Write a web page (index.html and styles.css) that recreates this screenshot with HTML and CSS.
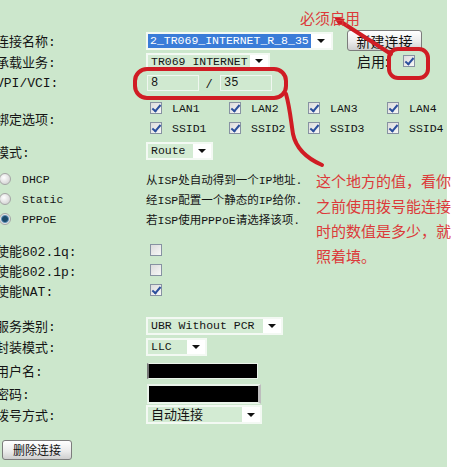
FILE: index.html
```html
<!DOCTYPE html>
<html lang="zh-CN">
<head>
<meta charset="utf-8">
<title>WAN 连接配置</title>
<link rel="stylesheet" href="styles.css">
</head>
<body>
<div class="panel">
  <div class="form">
    <div class="row r-name">
      <div class="lab">连接名称:</div>
      <div class="val">
        <div class="sel w-name"><span class="opt hl">2_TR069_INTERNET_R_8_35</span><span class="arr"></span></div>
        <button class="btn btn-new">新建连接</button>
      </div>
    </div>
    <div class="row r-svc">
      <div class="lab">承载业务:</div>
      <div class="val">
        <div class="sel w-svc"><span class="opt">TR069 INTERNET</span><span class="arr"></span></div>
        <span class="enable">启用:</span>
        <span class="cb on cb-enable"></span>
      </div>
    </div>
    <div class="row r-vpi">
      <div class="lab">VPI/VCI:</div>
      <div class="val">
        <span class="inp">8</span>
        <span class="slash">/</span>
        <span class="inp">35</span>
      </div>
    </div>
    <div class="row r-bind">
      <div class="lab">绑定选项:</div>
      <div class="val grid4">
        <span class="opt-cell"><span class="cb on"></span><span class="txt">LAN1</span></span>
        <span class="opt-cell"><span class="cb on"></span><span class="txt">LAN2</span></span>
        <span class="opt-cell"><span class="cb on"></span><span class="txt">LAN3</span></span>
        <span class="opt-cell"><span class="cb on"></span><span class="txt">LAN4</span></span>
        <span class="opt-cell"><span class="cb on"></span><span class="txt">SSID1</span></span>
        <span class="opt-cell"><span class="cb on"></span><span class="txt">SSID2</span></span>
        <span class="opt-cell"><span class="cb on"></span><span class="txt">SSID3</span></span>
        <span class="opt-cell"><span class="cb on"></span><span class="txt">SSID4</span></span>
      </div>
    </div>
    <div class="row r-mode">
      <div class="lab">模式:</div>
      <div class="val">
        <div class="sel w-mode"><span class="opt">Route</span><span class="arr"></span></div>
      </div>
    </div>
    <div class="row r-dhcp">
      <div class="lab"><span class="radio"></span><span class="rtxt">DHCP</span></div>
      <div class="val desc">从ISP处自动得到一个IP地址.</div>
    </div>
    <div class="row">
      <div class="lab"><span class="radio"></span><span class="rtxt">Static</span></div>
      <div class="val desc">经ISP配置一个静态的IP给你.</div>
    </div>
    <div class="row">
      <div class="lab"><span class="radio on"></span><span class="rtxt">PPPoE</span></div>
      <div class="val desc">若ISP使用PPPoE请选择该项.</div>
    </div>
    <div class="row r-q">
      <div class="lab">使能802.1q:</div>
      <div class="val pad"><span class="cb"></span></div>
    </div>
    <div class="row">
      <div class="lab">使能802.1p:</div>
      <div class="val pad"><span class="cb"></span></div>
    </div>
    <div class="row">
      <div class="lab">使能NAT:</div>
      <div class="val pad"><span class="cb on"></span></div>
    </div>
    <div class="row r-class">
      <div class="lab">服务类别:</div>
      <div class="val">
        <div class="sel w-class"><span class="opt">UBR Without PCR</span><span class="arr"></span></div>
      </div>
    </div>
    <div class="row">
      <div class="lab">封装模式:</div>
      <div class="val">
        <div class="sel w-encap"><span class="opt">LLC</span><span class="arr"></span></div>
      </div>
    </div>
    <div class="row r-user">
      <div class="lab">用户名:</div>
      <div class="val"><span class="blk user"></span></div>
    </div>
    <div class="row r-pwd">
      <div class="lab">密码:</div>
      <div class="val"><span class="blk pwd"></span></div>
    </div>
    <div class="row">
      <div class="lab">拨号方式:</div>
      <div class="val">
        <div class="sel w-dial"><span class="opt cjk">自动连接</span><span class="arr"></span></div>
      </div>
    </div>
    <div class="row r-del">
      <button class="btn btn-del">删除连接</button>
    </div>
  </div>

  <svg class="marks" width="469" height="468" viewBox="0 0 469 468" aria-hidden="true">
    <g fill="none" stroke="#d01c24" stroke-width="4" stroke-linecap="round" stroke-linejoin="round">
      <path d="M338 20 L391 54"/>
      <rect x="389" y="49" width="39" height="29" rx="9"/>
      <rect x="135" y="69" width="151" height="29" rx="12"/>
      <path d="M286 94 C290 108 291 122 293 134 C296 148 306 158 322 165"/>
    </g>
    <path d="M334 17 L345 19 L339 26 Z" fill="#d01c24"/>
  </svg>
  <div class="note note-top">必须启用</div>
  <div class="note note-main">这个地方的值，看你<br>之前使用拨号能连接<br>时的数值是多少，就<br>照着填。</div>
</div>
</body>
</html>
```

FILE: styles.css
```css
html, body {
  margin: 0;
  padding: 0;
  background: #ffffff;
}
body {
  width: 469px;
  height: 468px;
  overflow: hidden;
  font-family: "Liberation Mono", "Noto Sans CJK SC", monospace;
  font-size: 12px;
  color: #141414;
}
.panel {
  position: relative;
  width: 447px;
  height: 467px;
  background: #cce7cc;
}
.form {
  display: flex;
  flex-direction: column;
  margin-left: -4px;
  padding-top: 30px;
}
.row {
  display: flex;
  align-items: center;
  height: 21px;
}
.lab {
  width: 150px;
  flex: none;
  display: flex;
  align-items: center;
  font-family: "Liberation Mono", "Noto Sans CJK SC", monospace;
  font-size: 13px;
  white-space: nowrap;
}
.val {
  display: flex;
  align-items: center;
}
.r-svc { height: 20px; }
.r-vpi { height: 24px; }
.r-bind { height: 46px; }
.r-mode { height: 20px; }
.r-dhcp { margin-top: 8px; }
.r-dhcp, .r-dhcp ~ .row { height: 20px; }
.r-q { margin-top: 11px; }
.r-class { margin-top: 15px; height: 21px !important; }
.r-class ~ .row { height: 21px !important; }
.r-user { margin-top: 3px; }
.r-pwd { margin-top: 2px; }
.r-del { margin-top: 14px; height: 22px !important; }

/* selects */
.sel {
  display: flex;
  box-sizing: border-box;
  height: 18px;
  border: 2px solid #f3f9f3;
  background: #ffffff;
}
.sel .opt {
  flex: 1 1 auto;
  min-width: 0;
  overflow: hidden;
  white-space: nowrap;
  background: #d3ebd3;
  padding-left: 3px;
  line-height: 14px;
  font-size: 11.5px;
}
.sel .opt.hl {
  flex: 0 0 163px;
  padding-left: 2px;
  box-sizing: border-box;
  background: #3a7cd8;
  color: #ffffff;
}
.sel .opt.cjk {
  font-family: "Noto Sans CJK SC", sans-serif;
  font-size: 13px;
}
.sel .arr {
  flex: 0 0 18px;
  display: flex;
  align-items: center;
  justify-content: center;
}
.w-name .arr { flex-grow: 1; }
.sel .arr::after {
  content: "";
  border-left: 4px solid transparent;
  border-right: 4px solid transparent;
  border-top: 4px solid #111;
}
.w-name { width: 187px; }
.w-svc { width: 124px; height: 17px; }
.w-mode { width: 67px; }
.w-class { width: 137px; }
.w-encap { width: 61px; }
.w-dial { width: 116px; height: 19px; }

.enable {
  margin-left: 87px;
  font-family: "Noto Sans CJK SC", sans-serif;
  font-size: 14px;
}
.cb-enable { margin-left: 14px; }

/* buttons */
.btn {
  box-sizing: border-box;
  padding: 0;
  border: 1px solid #7c7c7c;
  border-radius: 3px;
  background: linear-gradient(#ffffff, #ececec 55%, #cfcfcf);
  color: #111;
  font-family: "Noto Sans CJK SC", sans-serif;
  line-height: 1;
}
.btn-new {
  margin-left: 14px;
  width: 75px;
  height: 21px;
  font-size: 14px;
}
.btn-del {
  margin-left: 6px;
  width: 70px;
  height: 20px;
  font-size: 12px;
}

/* text inputs */
.inp {
  box-sizing: border-box;
  width: 52px;
  height: 16px;
  margin-left: 1px;
  padding-left: 3px;
  border: 1px solid #f0f7f0;
  background: #d0e9d0;
  line-height: 14px;
}
.slash {
  width: 20px;
  text-align: center;
  margin-top: 4px;
}
.blk {
  box-sizing: border-box;
  margin-left: 1px;
  background: #000;
}
.blk.user {
  width: 111px;
  height: 16px;
  border: 1px solid #eaf4ea;
  border-left: 2px solid #777;
}
.blk.pwd {
  width: 114px;
  height: 20px;
  border: 2px solid #eaf4ea;
  border-right: 3px solid #bdbdbd;
}

/* checkboxes */
.cb {
  position: relative;
  box-sizing: border-box;
  display: inline-block;
  width: 12px;
  height: 12px;
  flex: none;
  border: 1px solid #8792a2;
  background: linear-gradient(135deg, #dcdcdc, #f7f7f7);
}
.cb.on::after {
  content: "";
  position: absolute;
  left: 3px;
  top: 0px;
  width: 3px;
  height: 7px;
  border-right: 2px solid #2b4f9c;
  border-bottom: 2px solid #2b4f9c;
  transform: rotate(40deg);
}
.grid4 {
  display: grid;
  grid-template-columns: repeat(4, 79px);
  grid-auto-rows: 20px;
  padding-left: 4px;
  align-items: center;
}
.opt-cell {
  display: flex;
  align-items: center;
}
.opt-cell .txt {
  margin-left: 10px;
  font-size: 11.5px;
}
.pad { padding-left: 4px; }

/* radios */
.radio {
  box-sizing: border-box;
  display: inline-block;
  width: 12px;
  height: 12px;
  margin-left: 3px;
  border-radius: 50%;
  border: 1px solid #a5a5a5;
  background: radial-gradient(circle at 40% 35%, #ffffff, #d9d9d9 70%);
}
.radio.on {
  background: radial-gradient(circle, #1b4a6a 0 2.5px, #5d8fb4 3.5px, #e6e6e6 4.5px);
}
.rtxt {
  margin-left: 11px;
  font-size: 11.5px;
}
.desc {
  font-size: 11.5px;
  white-space: nowrap;
}

/* annotations */
.marks {
  position: absolute;
  left: 0;
  top: 0;
}
.note {
  position: absolute;
  font-family: "Noto Sans CJK SC", sans-serif;
  color: #dc3a3a;
  white-space: nowrap;
}
.note-top {
  left: 300px;
  top: 8px;
  font-size: 15px;
  line-height: 20px;
}
.note-main {
  left: 316px;
  top: 168px;
  font-size: 15px;
  line-height: 25px;
}
```
